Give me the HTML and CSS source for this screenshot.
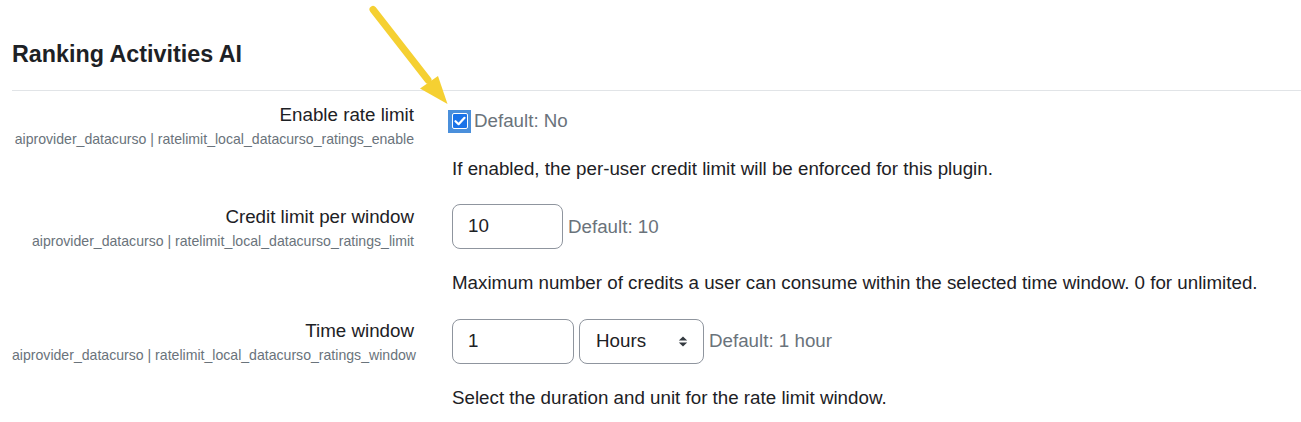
FILE: index.html
```html
<!DOCTYPE html>
<html lang="en">
<head>
<meta charset="utf-8">
<title>Ranking Activities AI</title>
<link rel="stylesheet" href="styles.css">
</head>
<body>
<div class="page">
  <h3 class="heading">Ranking Activities AI</h3>
  <hr class="rule">

  <div class="setting">
    <div class="label-col">
      <div class="label">Enable rate limit</div>
      <div class="setting-name">aiprovider_datacurso | ratelimit_local_datacurso_ratings_enable</div>
    </div>
    <div class="control-col control-col--check">
      <div class="control-line">
        <span class="check-highlight"><span class="check-box"><svg width="12" height="10" viewBox="0 0 12 10"><path d="M1.5 5.2 L4.6 8.2 L10.5 1.8" fill="none" stroke="#fff" stroke-width="2.2" stroke-linecap="round" stroke-linejoin="round"/></svg></span></span>
        <span class="default default--check">Default: No</span>
      </div>
      <div class="description">If enabled, the per-user credit limit will be enforced for this plugin.</div>
    </div>
  </div>

  <div class="setting">
    <div class="label-col">
      <div class="label">Credit limit per window</div>
      <div class="setting-name">aiprovider_datacurso | ratelimit_local_datacurso_ratings_limit</div>
    </div>
    <div class="control-col">
      <div class="control-line">
        <div class="input input--limit">10</div>
        <span class="default">Default: 10</span>
      </div>
      <div class="description">Maximum number of credits a user can consume within the selected time window. 0 for unlimited.</div>
    </div>
  </div>

  <div class="setting">
    <div class="label-col">
      <div class="label">Time window</div>
      <div class="setting-name">aiprovider_datacurso | ratelimit_local_datacurso_ratings_window</div>
    </div>
    <div class="control-col">
      <div class="control-line">
        <div class="input input--window">1</div>
        <div class="select">
          <span>Hours</span>
          <svg class="select-arrows" width="10" height="11" viewBox="0 0 10 11"><path d="M5 0.5 L9.2 4.4 H0.8 Z M5 10.5 L9.2 6.6 H0.8 Z" fill="#343a40"/></svg>
        </div>
        <span class="default">Default: 1 hour</span>
      </div>
      <div class="description">Select the duration and unit for the rate limit window.</div>
    </div>
  </div>

  <svg class="pointer-arrow" width="120" height="120" viewBox="0 0 120 120">
    <line x1="13" y1="9.5" x2="68" y2="80" stroke="#f5d032" stroke-width="7" stroke-linecap="round"/>
    <polygon points="60,88.5 78,76 87.5,104" fill="#f5d032"/>
  </svg>
</div>
</body>
</html>
```

FILE: styles.css
```css
* {
  box-sizing: border-box;
}

html, body {
  margin: 0;
  padding: 0;
  background: #ffffff;
}

body {
  font-family: "Liberation Sans", Arial, sans-serif;
  color: #1d2125;
  font-size: 18.75px;
  line-height: 28px;
}

.page {
  position: relative;
  width: 1301px;
  height: 422px;
  padding: 0 0 0 12px;
  overflow: hidden;
}

.heading {
  margin: 0;
  padding-top: 39.5px;
  font-size: 23.3px;
  line-height: 28px;
  font-weight: 700;
}

.rule {
  margin: 22.5px 0 10px 0;
  width: 1289px;
  border: 0;
  border-top: 1px solid #e1e4e7;
  height: 0;
}

.setting {
  display: flex;
  align-items: flex-start;
  margin-bottom: 20px;
}

.label-col {
  width: 402px;
  flex: none;
  text-align: right;
}

.label {
  font-size: 18.75px;
  line-height: 28px;
}

.setting-name {
  font-size: 14.1px;
  line-height: 21px;
  color: #6a737b;
  white-space: nowrap;
}

.control-col {
  margin-left: 38px;
  flex: none;
}

.control-col--check {
  padding-top: 6px;
}

.control-line {
  display: flex;
  align-items: center;
  gap: 5px;
}

.control-col:not(.control-col--check) .control-line {
  margin-top: 1px;
}

.check-highlight {
  width: 23px;
  height: 23px;
  margin-left: -4px;
  background: #4a8fdb;
  display: flex;
  align-items: center;
  justify-content: center;
}

.check-box {
  width: 16px;
  height: 16px;
  border: 1px solid #ffffff;
  border-radius: 2px;
  background: #1a73e8;
  display: flex;
  align-items: center;
  justify-content: center;
}

.default {
  color: #6a737b;
  font-size: 18.75px;
  line-height: 28px;
}

.default--check {
  margin-left: -2px;
}

.input {
  height: 45px;
  border: 1px solid #8f959e;
  border-radius: 8px;
  padding: 7px 15px 8px 15px;
  line-height: 28px;
  color: #1d2125;
  background: #fff;
}

.input--limit {
  width: 111px;
}

.input--window {
  width: 122px;
}

.select {
  width: 125px;
  height: 45px;
  margin-top: 1px;
  border: 1px solid #8f959e;
  border-radius: 8px;
  padding: 7px 15px 8px 16px;
  display: flex;
  align-items: center;
  justify-content: space-between;
  color: #1d2125;
  line-height: 28px;
}

.select-arrows {
  display: block;
  margin-top: 1px;
}

.description {
  margin-top: 20px;
  line-height: 28px;
}

.pointer-arrow {
  position: absolute;
  left: 360px;
  top: 0;
}
```
